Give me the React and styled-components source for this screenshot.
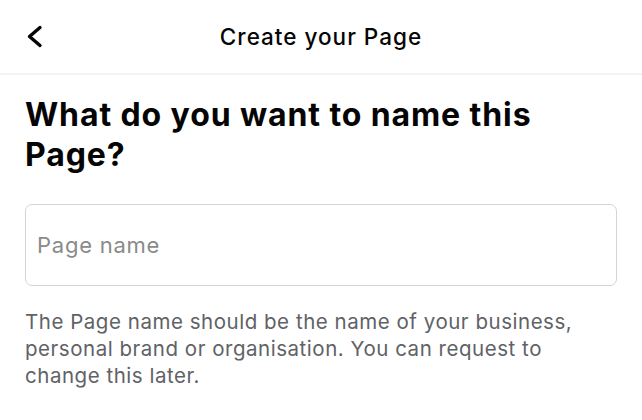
import React from "react";
import styled, { createGlobalStyle } from "styled-components";

const Global = createGlobalStyle`
  html, body { margin: 0; padding: 0; background: #ffffff; }
  body { font-family: Inter, "Noto Sans", sans-serif; -webkit-font-smoothing: antialiased; }
  * { box-sizing: border-box; }
`;

const Screen = styled.div`
  width: 642px;
  height: 420px;
  background: #ffffff;
  display: flex;
  flex-direction: column;
  overflow: hidden;
`;

const Header = styled.header`
  height: 75px;
  display: grid;
  grid-template-columns: 60px 1fr 60px;
  align-items: center;
  border-bottom: 2px solid #f3f3f3;
`;

const BackButton = styled.button`
  border: none;
  background: none;
  padding: 0 0 0 25px;
  height: 100%;
  display: flex;
  align-items: center;
  cursor: pointer;
`;

const Title = styled.h1`
  margin: 0;
  text-align: center;
  font-size: 22.5px;
  font-weight: 500;
  color: #050505;
  letter-spacing: 1px;
  padding-bottom: 1px;
`;

const Body = styled.main`
  padding: 20px 25px 0;
  display: flex;
  flex-direction: column;
`;

const Heading = styled.h2`
  margin: 0;
  font-size: 32px;
  line-height: 40px;
  font-weight: 700;
  color: #050505;
  letter-spacing: 0.9px;
  max-width: 560px;
`;

const Field = styled.input`
  margin-top: 29px;
  width: 592px;
  height: 82px;
  border: 1.5px solid #d4d4d4;
  border-radius: 7px;
  padding: 0 11px;
  font-family: inherit;
  font-size: 22px;
  letter-spacing: 0.75px;
  color: #050505;
  outline: none;
  &::placeholder { color: #8a8a8a; }
`;

const Help = styled.p`
  margin: 22px 0 0;
  font-size: 20.5px;
  line-height: 27px;
  letter-spacing: 0.53px;
  color: #606266;
  max-width: 570px;
`;

const Chevron = () => (
  <svg width="19" height="23" viewBox="0 0 19 23" fill="none">
    <path d="M15 2.5 L4.5 11.5 L15 20.5" stroke="#050505" strokeWidth="3.4" strokeLinecap="round" strokeLinejoin="round" />
  </svg>
);

export default function App() {
  return (
    <Screen>
      <Global />
      <Header>
        <BackButton aria-label="Back"><Chevron /></BackButton>
        <Title>Create your Page</Title>
        <span />
      </Header>
      <Body>
        <Heading>What do you want to name this Page?</Heading>
        <Field placeholder="Page name" />
        <Help>
          The Page name should be the name of your business, personal brand or organisation. You can request to change this later.
        </Help>
      </Body>
    </Screen>
  );
}
